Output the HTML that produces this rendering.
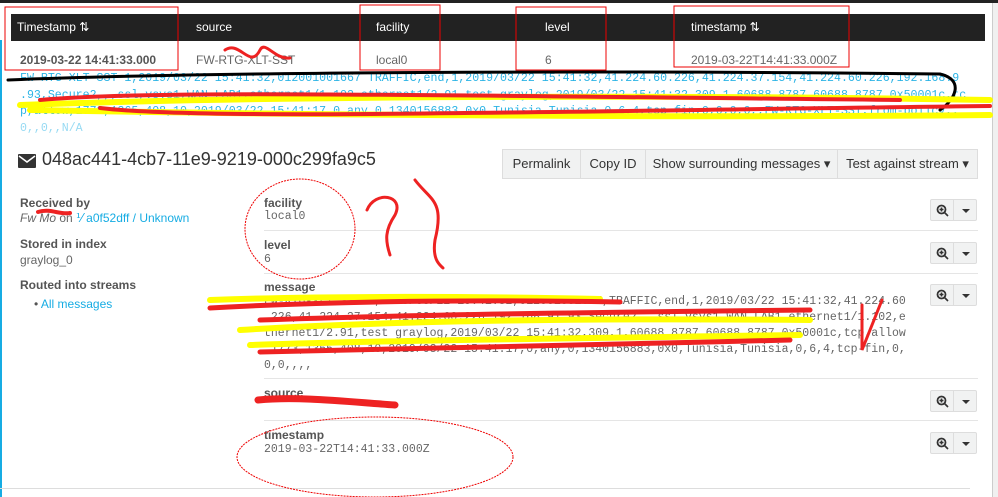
<!DOCTYPE html>
<html><head><meta charset="utf-8"><style>
*{margin:0;padding:0;box-sizing:border-box}
body{width:998px;height:497px;background:#fff;font-family:"Liberation Sans",sans-serif;color:#666;position:relative;overflow:hidden;font-size:12px}
.a{position:absolute}
.th{color:#fff;font-size:12px;top:20px}
.mono{font-family:"Liberation Mono",monospace}
.blue{color:#16ace3}
.btn{position:absolute;top:149px;height:30px;border:1px solid #ddd;background:#f1f2f2;color:#333;font-size:13px;line-height:28px;text-align:center}
.lbl{font-weight:bold;color:#555;font-size:12px}
.sep{position:absolute;left:264px;width:714px;height:1px;background:#e5e5e5}
.zb{position:absolute;left:930px;width:47px;height:22px;border:1px solid #ddd;background:#f1f2f2;border-radius:2px}
.zb:after{content:"";position:absolute;left:22px;top:0;width:1px;height:20px;background:#ddd}
.zb svg{position:absolute;left:5px;top:4px}
.zb b{position:absolute;left:31px;top:9px;border-left:4px solid transparent;border-right:4px solid transparent;border-top:4px solid #333}
</style></head><body>
<div class="a" style="left:0;top:0;width:998px;height:3px;background:#222"></div>
<div class="a" style="left:0;top:40px;width:2px;height:457px;background:#16ace3"></div>
<div class="a" style="left:992px;top:3px;width:1px;height:494px;background:#ccc"></div>
<div class="a" style="left:993px;top:3px;width:5px;height:494px;background:#f0f0f0"></div>
<div class="a" style="left:11px;top:14px;width:974px;height:27px;background:#222"></div>
<div class="a th" style="left:17px">Timestamp ⇅</div>
<div class="a th" style="left:196px">source</div>
<div class="a th" style="left:376px">facility</div>
<div class="a th" style="left:545px">level</div>
<div class="a th" style="left:691px">timestamp ⇅</div>
<div class="a" style="left:20px;top:53px;font-weight:bold;color:#555">2019-03-22 14:41:33.000</div>
<div class="a" style="left:196px;top:53px">FW-RTG-XLT-SST</div>
<div class="a" style="left:376px;top:53px">local0</div>
<div class="a" style="left:545px;top:53px">6</div>
<div class="a" style="left:691px;top:53px">2019-03-22T14:41:33.000Z</div>
<div class="a mono blue" style="left:20px;top:71px;font-size:11.6px;line-height:16.5px;white-space:pre;opacity:.9">FW-RTG-XLT-SST 1,2019/03/22 15:41:32,012001001667 TRAFFIC,end,1,2019/03/22 15:41:32,41.224.60.226,41.224.37.154,41.224.60.226,192.168.9
.93,Secure2,,,ssl,vsys1,WAN LAB1,ethernet1/1.102,ethernet1/2.91,test graylog,2019/03/22 15:41:32,309,1,60688,8787,60688,8787,0x50001c,tc
p,allow,1773,1365,408,10,2019/03/22 15:41:17,0,any,0,1340156883,0x0,Tunisia,Tunisia,0,6,4,tcp-fin,0,0,0,0,,FW-RTG-XLT-SST,from-policy,,
<span style="opacity:.5">0,,0,,N/A</span></div>
<svg class="a" style="left:18px;top:154px" width="18" height="14" viewBox="0 0 18 14"><rect width="18" height="14" rx="1" fill="#333"/><path d="M1 2 L9 8 L17 2" stroke="#fff" stroke-width="1.5" fill="none"/></svg>
<div class="a" style="left:42px;top:149px;font-size:18px;color:#333">048ac441-4cb7-11e9-9219-000c299fa9c5</div>
<div class="btn" style="left:502px;width:79px">Permalink</div>
<div class="btn" style="left:580px;width:66px">Copy ID</div>
<div class="btn" style="left:645px;width:193px">Show surrounding messages ▾</div>
<div class="btn" style="left:837px;width:141px">Test against stream ▾</div>
<div class="a lbl" style="left:20px;top:196px">Received by</div>
<div class="a" style="left:20px;top:211px;font-style:italic">Fw Mo<span style="font-style:normal"> on </span><span class="blue" style="font-style:normal">⅟ a0f52dff / Unknown</span></div>
<div class="a lbl" style="left:20px;top:237px">Stored in index</div>
<div class="a" style="left:20px;top:253px">graylog_0</div>
<div class="a lbl" style="left:20px;top:278px">Routed into streams</div>
<div class="a" style="left:34px;top:297px"><span style="color:#555">•</span> <span class="blue">All messages</span></div>
<div class="a lbl" style="left:264px;top:196px">facility</div>
<div class="a mono" style="left:264px;top:210px;font-size:11.5px">local0</div>
<div class="sep" style="top:230px"></div>
<div class="a lbl" style="left:264px;top:238px">level</div>
<div class="a mono" style="left:264px;top:253px;font-size:11.5px">6</div>
<div class="sep" style="top:273px"></div>
<div class="a lbl" style="left:264px;top:280px">message</div>
<div class="a mono" style="left:264px;top:294px;font-size:11.5px;line-height:16px;white-space:pre">FW-RTG-XLT-SST 1,2019/03/22 15:41:32,012001001667,TRAFFIC,end,1,2019/03/22 15:41:32,41.224.60
.226,41.224.37.154,41.224.60.226,192.168.91.93,Secure2,,,ssl,vsys1,WAN LAB1,ethernet1/1.102,e
thernet1/2.91,test graylog,2019/03/22 15:41:32,309,1,60688,8787,60688,8787,0x50001c,tcp,allow
,1773,1365,408,10,2019/03/22 15:41:17,0,any,0,1340156883,0x0,Tunisia,Tunisia,0,6,4,tcp-fin,0,
0,0,,,,</div>
<div class="sep" style="top:378px"></div>
<div class="a lbl" style="left:264px;top:386px">source</div>
<div class="sep" style="top:420px"></div>
<div class="a lbl" style="left:264px;top:428px">timestamp</div>
<div class="a mono" style="left:264px;top:443px;font-size:11.5px">2019-03-22T14:41:33.000Z</div>
<div class="a" style="left:0;top:488px;width:970px;height:1px;background:#ddd"></div>
<div class="zb" style="top:199px"><svg width="13" height="13" viewBox="0 0 13 13"><circle cx="5.5" cy="5.5" r="4" stroke="#333" stroke-width="1.8" fill="none"/><path d="M3.5 5.5h4M5.5 3.5v4M8.5 8.5l3.5 3.5" stroke="#333" stroke-width="1.6"/></svg><b></b></div>
<div class="zb" style="top:242px"><svg width="13" height="13" viewBox="0 0 13 13"><circle cx="5.5" cy="5.5" r="4" stroke="#333" stroke-width="1.8" fill="none"/><path d="M3.5 5.5h4M5.5 3.5v4M8.5 8.5l3.5 3.5" stroke="#333" stroke-width="1.6"/></svg><b></b></div>
<div class="zb" style="top:284px"><svg width="13" height="13" viewBox="0 0 13 13"><circle cx="5.5" cy="5.5" r="4" stroke="#333" stroke-width="1.8" fill="none"/><path d="M3.5 5.5h4M5.5 3.5v4M8.5 8.5l3.5 3.5" stroke="#333" stroke-width="1.6"/></svg><b></b></div>
<div class="zb" style="top:390px"><svg width="13" height="13" viewBox="0 0 13 13"><circle cx="5.5" cy="5.5" r="4" stroke="#333" stroke-width="1.8" fill="none"/><path d="M3.5 5.5h4M5.5 3.5v4M8.5 8.5l3.5 3.5" stroke="#333" stroke-width="1.6"/></svg><b></b></div>
<div class="zb" style="top:432px"><svg width="13" height="13" viewBox="0 0 13 13"><circle cx="5.5" cy="5.5" r="4" stroke="#333" stroke-width="1.8" fill="none"/><path d="M3.5 5.5h4M5.5 3.5v4M8.5 8.5l3.5 3.5" stroke="#333" stroke-width="1.6"/></svg><b></b></div>
<svg class="a" style="left:0;top:0" width="998" height="497">
<g fill="none" stroke="#e00" stroke-width="1">
<rect x="5" y="7" width="173" height="63"/><rect x="360" y="5" width="80" height="65"/>
<rect x="516" y="7" width="90" height="63"/><rect x="674" y="6" width="175" height="61"/>
<ellipse cx="300" cy="229" rx="55" ry="50" stroke-dasharray="2 1"/>
<ellipse cx="375" cy="457" rx="138" ry="40" stroke-dasharray="2 1"/>
</g>
<g fill="none" stroke-linecap="round">
<path d="M8 80 C200 72 600 70 940 74 C965 80 955 100 940 110" stroke="#000" stroke-width="3"/>
<path d="M20 105 C300 95 700 95 990 100 M30 110 C300 115 700 118 990 115" stroke="#ff0" stroke-width="6"/>
<path d="M40 100 C150 90 400 95 900 100 M100 108 C200 120 500 112 990 106" stroke="#e22" stroke-width="4"/>
<path d="M225 50 C240 40 250 70 260 50 C265 40 275 60 290 58" stroke="#e22" stroke-width="3"/>
<path d="M210 300 C350 295 500 297 600 299 M240 330 C400 320 600 318 810 320 M250 345 C400 340 600 338 800 335" stroke="#ff0" stroke-width="6"/>
<path d="M210 308 C350 300 500 300 620 302 M260 320 C400 315 600 312 810 310 M260 352 C400 348 600 345 790 340" stroke="#e22" stroke-width="5"/>
<path d="M258 400 C300 396 350 402 395 405" stroke="#e22" stroke-width="7"/>
<path d="M367 210 C375 190 405 195 395 215 C385 230 385 240 390 255" stroke="#e22" stroke-width="3"/>
<path d="M415 180 C430 200 445 200 435 240 C432 260 440 265 443 268" stroke="#e22" stroke-width="3"/>
<path d="M862 305 L862 350 L882 300" stroke="#e22" stroke-width="3"/>
<path d="M38 212 C50 208 60 215 70 213" stroke="#e22" stroke-width="4"/>
</g>
</svg>
</body></html>
